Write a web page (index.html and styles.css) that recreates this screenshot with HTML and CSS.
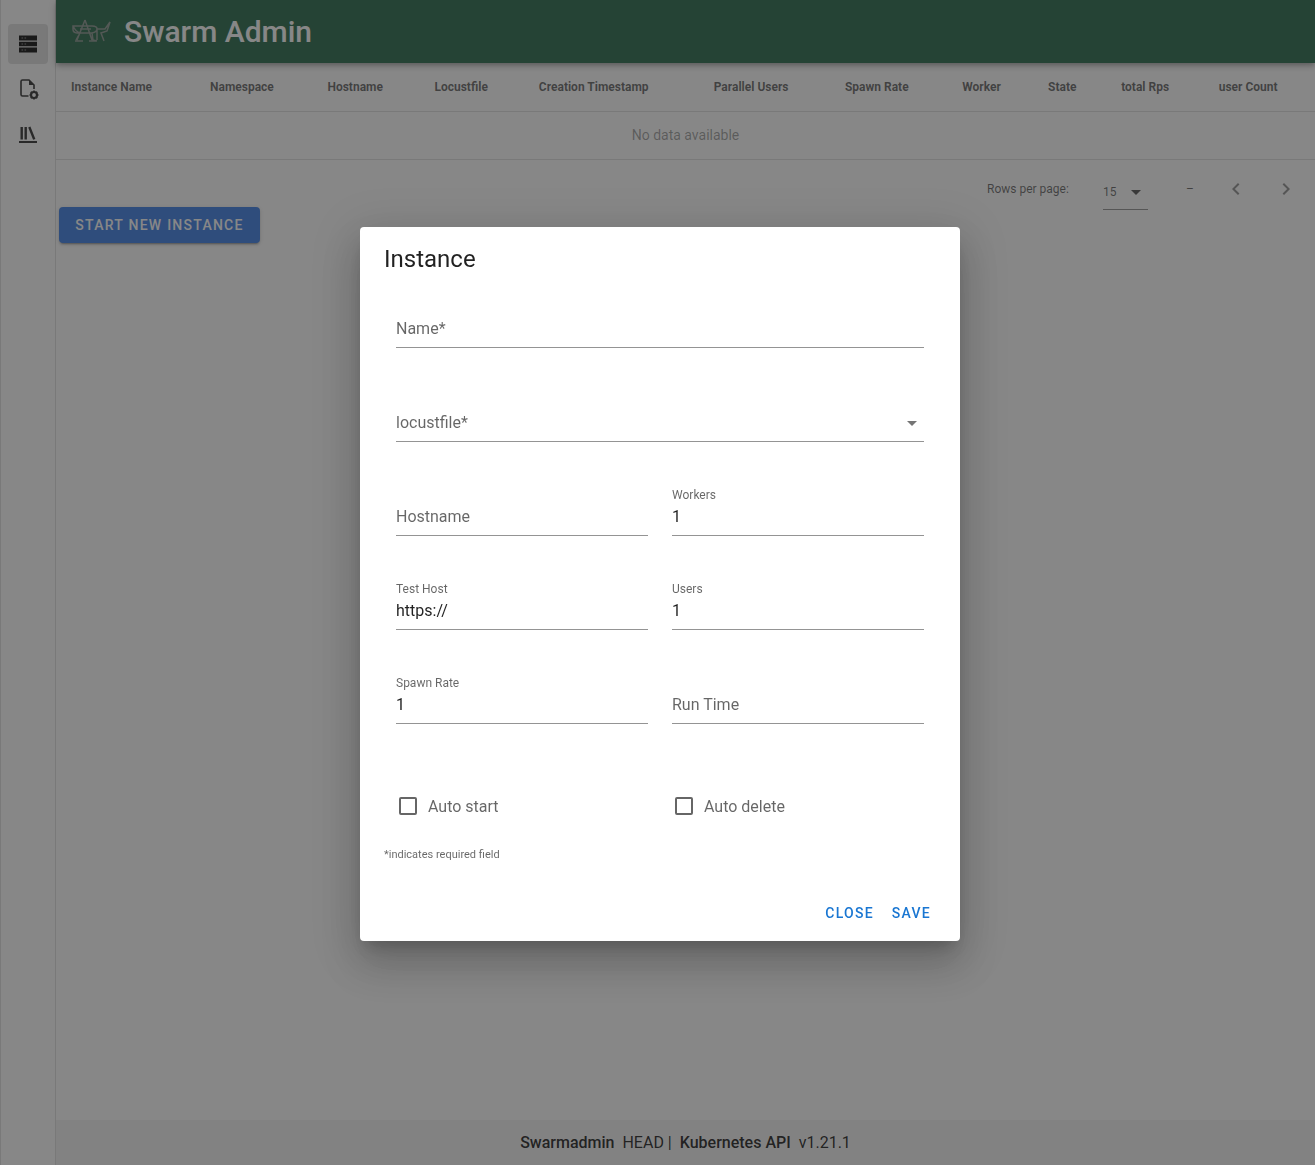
FILE: index.html
```html
<!DOCTYPE html>
<html lang="en">
<head>
	<meta charset="UTF-8">
	<title>Swarm Admin</title>
	<link rel="stylesheet" href="styles.css">
</head>
<body>
	<div class="app">
		<nav class="sidebar">
			<a class="nav-item active">
				<svg width="24" height="24" viewBox="0 0 24 24"><path d="M3 3.5h18v5H3zM3 9.75h18v4.5H3zM3 15.5h18v5H3z" fill="#111"/><path d="M5.5 5.5h1.6v1H5.5zM8.5 5.5h1.6v1H8.5zM5.5 11.5h1.6v1H5.5zM8.5 11.5h1.6v1H8.5zM5.5 17.5h1.6v1H5.5zM8.5 17.5h1.6v1H8.5z" fill="#8a8a8a"/></svg>
			</a>
			<a class="nav-item">
				<svg width="24" height="24" viewBox="0 0 24 24"><path d="M12.5 19H6.5a1.5 1.5 0 0 1-1.5-1.5v-13A1.5 1.5 0 0 1 6.5 3H13l5 5v4" fill="none" stroke="#333" stroke-width="1.6"/><path d="M13 3l5 5h-5z" fill="#333"/><circle cx="18" cy="18" r="3" fill="none" stroke="#333" stroke-width="2.2"/><path d="M18 13.5v2M18 20.5v2M13.5 18h2M20.5 18h2M14.8 14.8l1.4 1.4M19.8 19.8l1.4 1.4M14.8 21.2l1.4-1.4M19.8 16.2l1.4-1.4" stroke="#333" stroke-width="1.6"/></svg>
			</a>
			<a class="nav-item">
				<svg width="24" height="24" viewBox="0 0 24 24"><path d="M3 19h18v2H3zM4.5 5h2.4v12.5H4.5zM8.5 5h2.4v12.5H8.5zM12.2 5.4l2.2-.8 5 12.3-2.3.9z" fill="#333"/></svg>
			</a>
		</nav>
		<div class="main">
			<header class="topbar">
				<svg class="logo" width="40" height="26" viewBox="0 0 40 26" fill="none" stroke="#8f9a94" stroke-width="1.5"><path d="M1 7h19q5 0 5 3t-5 4H5q-4-.5-4-3.500zM1 7q3 6 7 7l-4 7M13 1L5 21M13 1l7 20M8 10h11M25 10h8l5-7-3 9-6 2 3 8M20 14l1 7 4 1M25 10v11M3 22h8M17 22h7"/></svg>
				<h1 class="title">Swarm Admin</h1>
			</header>
			<div class="content">
				<table class="data-table">
					<thead>
						<tr>
							<th>Instance Name</th>
							<th>Namespace</th>
							<th>Hostname</th>
							<th>Locustfile</th>
							<th>Creation Timestamp</th>
							<th>Parallel Users</th>
							<th>Spawn Rate</th>
							<th>Worker</th>
							<th>State</th>
							<th>total Rps</th>
							<th>user Count</th>
						</tr>
					</thead>
					<tbody>
						<tr><td colspan="11">No data available</td></tr>
					</tbody>
				</table>
				<div class="pager">
					<span class="pager-label">Rows per page:</span>
					<div class="pager-select"><span>15</span><i class="caret caret-dark"></i></div>
					<span class="pager-range">–</span>
					<svg class="chevron" width="24" height="24" viewBox="0 0 24 24"><path d="M15.41 7.41L14 6l-6 6 6 6 1.41-1.41L10.83 12z" fill="#666"/></svg>
					<svg class="chevron" width="24" height="24" viewBox="0 0 24 24"><path d="M10 6L8.59 7.41 13.17 12l-4.58 4.59L10 18l6-6z" fill="#666"/></svg>
				</div>
				<button class="start-btn">Start new instance</button>
			</div>
			<footer class="footer"><b>Swarmadmin</b> HEAD | <b>Kubernetes API</b> v1.21.1</footer>
		</div>
	</div>

	<div class="overlay">
		<div class="dialog">
			<h2 class="dialog-title">Instance</h2>
			<div class="form-grid">
				<div class="field wide"><span class="ghost">Name*</span></div>
				<div class="field wide"><span class="ghost">locustfile*</span><i class="caret"></i></div>
				<div class="field"><span class="ghost">Hostname</span></div>
				<div class="field"><label>Workers</label><span class="value">1</span></div>
				<div class="field"><label>Test Host</label><span class="value">https://</span></div>
				<div class="field"><label>Users</label><span class="value">1</span></div>
				<div class="field"><label>Spawn Rate</label><span class="value">1</span></div>
				<div class="field"><span class="ghost">Run Time</span></div>
				<div class="check"><i class="box"></i>Auto start</div>
				<div class="check"><i class="box"></i>Auto delete</div>
			</div>
			<small class="hint">*indicates required field</small>
			<div class="dialog-actions">
				<button class="text-btn">Close</button>
				<button class="text-btn">Save</button>
			</div>
		</div>
	</div>
</body>
</html>
```
FILE: styles.css
```css
* {
	box-sizing: border-box;
}
html, body {
	margin: 0;
	height: 100%;
	overflow: hidden;
}
body {
	font-family: Roboto, "Liberation Sans", sans-serif;
	color: rgba(0, 0, 0, 0.87);
	background: #fff;
}
.app {
	display: flex;
	height: 1165px;
}

/* left nav */
.sidebar {
	width: 56px;
	flex: none;
	padding: 24px 8px 0;
	background: #fff;
	border-right: 1px solid rgba(0, 0, 0, 0.12);
	border-left: 1px solid rgba(0, 0, 0, 0.12);
	display: flex;
	flex-direction: column;
	align-items: center;
}
.nav-item {
	width: 40px;
	height: 40px;
	margin-bottom: 5px;
	border-radius: 4px;
	display: flex;
	align-items: center;
	justify-content: center;
}
.nav-item.active {
	background: rgba(0, 0, 0, 0.12);
}

.main {
	flex: 1;
	min-width: 0;
	display: flex;
	flex-direction: column;
}
.topbar {
	height: 63px;
	flex: none;
	background: #2a6b4c;
	display: flex;
	align-items: center;
	padding-left: 16px;
	box-shadow: 0 2px 4px -1px rgba(0,0,0,.2), 0 4px 5px 0 rgba(0,0,0,.14), 0 1px 10px 0 rgba(0,0,0,.12);
	position: relative;
}
.logo {
	margin-right: 12px;
}
.title {
	margin: 0;
	font-size: 30px;
	font-weight: 500;
	color: #fff;
}
.content {
	flex: 1;
}

/* table */
.data-table {
	width: 100%;
	border-collapse: collapse;
	table-layout: auto;
}
.data-table th {
	height: 48px;
	padding: 0 15px;
	font-size: 12px;
	font-weight: 700;
	text-align: left;
	white-space: nowrap;
	color: rgba(0, 0, 0, 0.6);
	border-bottom: 1px solid rgba(0, 0, 0, 0.12);
}
.data-table td {
	height: 48px;
	text-align: center;
	font-size: 14px;
	color: rgba(0, 0, 0, 0.38);
	border-bottom: 1px solid rgba(0, 0, 0, 0.12);
}
.pager {
	height: 58px;
	display: flex;
	align-items: center;
	font-size: 12px;
	color: rgba(0, 0, 0, 0.6);
	padding-left: 931px;
}
.pager-label {
	width: 116px;
}
.pager-select {
	width: 45px;
	height: 34px;
	display: flex;
	align-items: center;
	justify-content: space-between;
	padding: 0 7px 0 0;
	border-bottom: 1px solid rgba(0, 0, 0, 0.42);
	margin-top: 8px;
}
.pager-range {
	margin-left: 38px;
	width: 30px;
}
.chevron {
	margin-left: 8px;
	flex: none;
	opacity: .7;
}
.chevron + .chevron {
	margin-left: 26px;
}
.caret {
	position: absolute;
	right: 7px;
	top: 21px;
	width: 0;
	height: 0;
	border: 5px solid transparent;
	border-top-color: #757575;
	border-bottom: 0;
}
.caret-dark {
	position: static;
	border-top-color: #555;
}
.start-btn {
	display: block;
	margin: 0 0 0 3px;
	width: 201px;
	height: 36px;
	font: 500 14px Roboto, sans-serif;
	letter-spacing: 1.25px;
	text-transform: uppercase;
	color: #fff;
	background: #3f81e8;
	border: 0;
	border-radius: 4px;
	box-shadow: 0 3px 1px -2px rgba(0,0,0,.2), 0 2px 2px 0 rgba(0,0,0,.14), 0 1px 5px 0 rgba(0,0,0,.12);
}
.start-btn {
	margin-top: -11px;
}
.footer {
	height: 45px;
	flex: none;
	display: flex;
	align-items: center;
	justify-content: center;
	gap: 4px;
	font-size: 16px;
	background: #f5f5f5;
	white-space: pre;
}
.footer b {
	font-weight: 500;
}

/* dialog */
.overlay {
	position: fixed;
	top: 0;
	left: 0;
	right: 0;
	bottom: 0;
	background: rgba(33, 33, 33, 0.54);
}
.dialog {
	position: absolute;
	top: 227px;
	left: 360px;
	width: 600px;
	height: 714px;
	background: #fff;
	border-radius: 4px;
	padding: 16px 24px 0;
	box-shadow: 0 11px 15px -7px rgba(0,0,0,.2), 0 24px 38px 3px rgba(0,0,0,.14), 0 9px 46px 8px rgba(0,0,0,.12);
}
.dialog-title {
	margin: 0;
	font-size: 24px;
	line-height: 32px;
	font-weight: 400;
}
.form-grid {
	margin-top: 19px;
	padding: 0 12px;
	display: grid;
	grid-template-columns: 252px 252px;
	column-gap: 24px;
	grid-auto-rows: 94px;
}
.field {
	position: relative;
	height: 42px;
	margin-top: 12px;
	border-bottom: 1px solid rgba(0, 0, 0, 0.42);
	font-size: 16px;
}
.field.wide {
	grid-column: span 2;
}
.field label {
	position: absolute;
	top: -6px;
	left: 0;
	font-size: 12px;
	color: rgba(0, 0, 0, 0.6);
}
.ghost, .value {
	position: absolute;
	top: 11px;
	left: 0;
	line-height: 24px;
}
.ghost {
	color: rgba(0, 0, 0, 0.6);
}
.check {
	display: flex;
	align-items: center;
	height: 24px;
	margin-top: 30px;
	font-size: 16px;
	color: rgba(0, 0, 0, 0.6);
}
.box {
	width: 18px;
	height: 18px;
	margin: 0 11px 0 3px;
	border: 2px solid rgba(0, 0, 0, 0.6);
	border-radius: 2px;
}
.hint {
	display: block;
	margin-top: -10px;
	font-size: 11px;
	color: rgba(0, 0, 0, 0.6);
}
.dialog-actions {
	display: flex;
	justify-content: flex-end;
	gap: 8px;
	margin-top: 34px;
	padding-right: -8px;
}
.text-btn {
	height: 36px;
	padding: 0 5px;
	background: none;
	border: 0;
	font: 500 14px Roboto, sans-serif;
	letter-spacing: 1.25px;
	text-transform: uppercase;
	color: #1976d2;
}
```
